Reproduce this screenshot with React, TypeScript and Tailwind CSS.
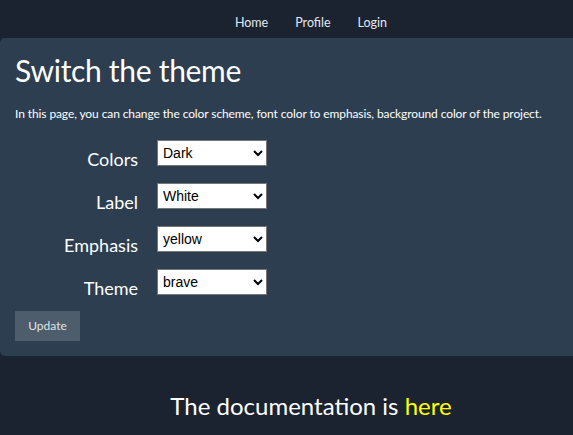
import { useState } from 'react';

const fields = [
  { label: 'Colors', options: ['Dark', 'Light'], value: 'Dark' },
  { label: 'Label', options: ['White', 'Black'], value: 'White' },
  { label: 'Emphasis', options: ['yellow', 'red', 'green'], value: 'yellow' },
  { label: 'Theme', options: ['brave', 'calm'], value: 'brave' },
];

export default function App() {
  const [values, setValues] = useState(fields.map((f) => f.value));

  return (
    <div className="min-h-screen w-full overflow-hidden bg-[#1b2331] font-['Lato','Noto_Sans',sans-serif] text-white">
      <div className="w-[622px]">
        <nav className="flex h-[38px] items-center justify-center gap-[27px] pt-[8px] text-[12.5px] text-[#e4e9ef]">
          <a href="#">Home</a>
          <a href="#">Profile</a>
          <a href="#">Login</a>
        </nav>

        <div className="rounded-[5px] bg-[#2c3e50] px-[15px] pt-[12px] pb-[15px]">
          <h1 className="text-[30px] leading-[40px] tracking-[-0.3px]">Switch the theme</h1>
          <p className="mt-[15px] text-[12px] leading-[18px] tracking-[-0.1px]">
            In this page, you can change the color scheme, font color to emphasis, background color of the project.
          </p>

          <div className="mt-[17px] flex flex-col gap-[17px]">
            {fields.map((f, i) => (
              <div key={f.label} className="flex items-end">
                <label className="mb-[-5px] w-[123px] text-right text-[18px] leading-[24px]">{f.label}</label>
                <select
                  value={values[i]}
                  onChange={(e) => {
                    const next = [...values];
                    next[i] = e.target.value;
                    setValues(next);
                  }}
                  className="ml-[19px] h-[26px] w-[110px] border border-[#767676] bg-white pl-[1px] font-['Liberation_Sans',Arial,sans-serif] text-[14px] text-black"
                >
                  {f.options.map((o) => (
                    <option key={o}>{o}</option>
                  ))}
                </select>
              </div>
            ))}
          </div>

          <button className="mt-[16px] h-[30px] w-[65px] bg-[#4e5d6c] text-[12px] text-[#dfe4ea]">Update</button>
        </div>

        <p className="mt-[32px] text-center text-[24px]">
          The documentation is <a href="#" className="text-[#ffff00]">here</a>
        </p>
      </div>
    </div>
  );
}
